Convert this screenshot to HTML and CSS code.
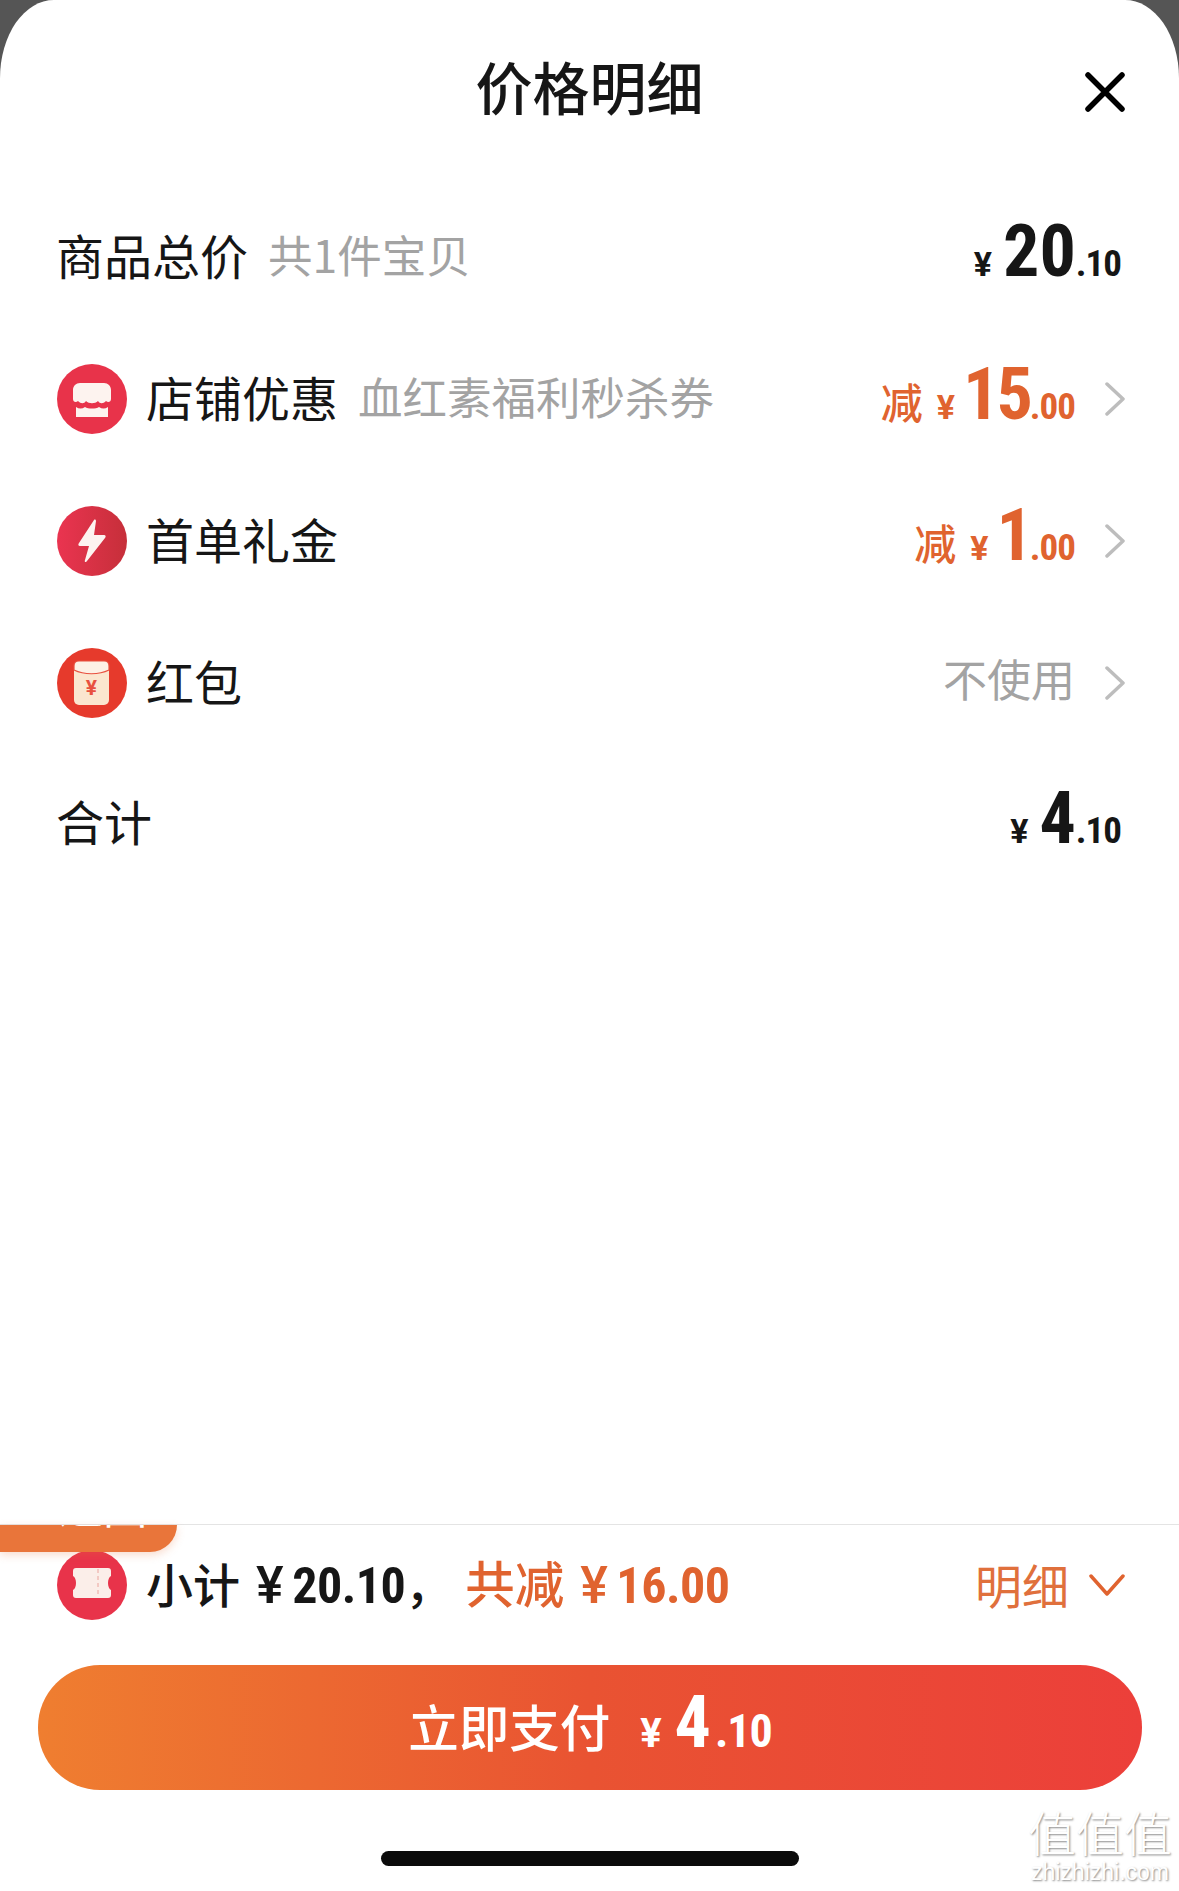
FILE: index.html
```html
<!DOCTYPE html>
<html lang="zh">

<head>
    <meta charset="UTF-8">
    <meta name="viewport" content="width=device-width, initial-scale=1.0">
    <title>价格明细</title>
    <link rel="stylesheet" href="styles.css">
</head>

<body>
    <div class="sheet">
        <header class="sheet-header">
            <h1>价格明细</h1>
            <svg class="close-icon" viewBox="0 0 40 40">
                <path d="M3 3L37 37M37 3L3 37" />
            </svg>
        </header>

        <main class="rows">
            <div class="row">
                <span class="row-title">商品总价</span>
                <span class="row-note">共1件宝贝</span>
                <div class="price">
                    <span class="yen">¥</span><span class="big">20</span><span class="small">.10</span>
                </div>
            </div>

            <div class="row has-arrow">
                <svg class="row-icon" viewBox="0 0 70 70">
                    <circle cx="35" cy="35" r="35" fill="#e8334a" />
                    <path fill="#fdf3ef" d="M23 19H47C51 19 54 22 54 26V35C54 38 51 39 49 37C46 40 43 40 41 37C38 40 32 40 29 37C27 40 24 40 21 37C19 39 16 38 16 35V26C16 22 19 19 23 19Z" />
                    <path fill="#fdf3ef" d="M19 43C22 45 25 45 28 43C31 45 39 45 42 43C45 45 48 45 51 43V53H19Z" />
                </svg>
                <span class="row-title">店铺优惠</span>
                <span class="row-note">血红素福利秒杀券</span>
                <div class="price discount">
                    <span class="jian">减</span><span class="yen">¥</span><span class="big">15</span><span class="small">.00</span>
                </div>
                <svg class="arrow" viewBox="0 0 20 34">
                    <path d="M2 2L18 17L2 32" />
                </svg>
            </div>

            <div class="row has-arrow">
                <svg class="row-icon" viewBox="0 0 70 70">
                    <defs>
                        <linearGradient id="boltBg" x1="0" x2="1" y1="0" y2="0">
                            <stop offset="0" stop-color="#ea3450" />
                            <stop offset="1" stop-color="#c62f3a" />
                        </linearGradient>
                    </defs>
                    <circle cx="35" cy="35" r="35" fill="url(#boltBg)" />
                    <path fill="#fdf3f0" d="M37 14C38 13 39 14 39 15L37 29H47C49 29 49 31 48 32L30 55C29 57 27 56 28 54L32 40H23C21 40 21 38 22 37Z" />
                </svg>
                <span class="row-title">首单礼金</span>
                <div class="price discount">
                    <span class="jian">减</span><span class="yen">¥</span><span class="big">1</span><span class="small">.00</span>
                </div>
                <svg class="arrow" viewBox="0 0 20 34">
                    <path d="M2 2L18 17L2 32" />
                </svg>
            </div>

            <div class="row has-arrow">
                <svg class="row-icon" viewBox="0 0 70 70">
                    <circle cx="35" cy="35" r="35" fill="#e63a2c" />
                    <rect x="17" y="13" width="35" height="44" rx="5" fill="#fbe6cf" />
                    <path fill="#fdf1e6" stroke="#e8503f" stroke-width="1.2" d="M17 22V18C17 15 19 13 22 13H47C50 13 52 15 52 18V22C42 27 27 27 17 22Z" />
                    <text class="packet-yen" x="34.5" y="47" text-anchor="middle">¥</text>
                </svg>
                <span class="row-title">红包</span>
                <div class="price"><span class="unused">不使用</span></div>
                <svg class="arrow" viewBox="0 0 20 34">
                    <path d="M2 2L18 17L2 32" />
                </svg>
            </div>

            <div class="row">
                <span class="row-title">合计</span>
                <div class="price">
                    <span class="yen">¥</span><span class="big">4</span><span class="small">.10</span>
                </div>
            </div>
        </main>

        <footer class="bottom-bar">
            <div class="back-tag"><span class="back-label">‹ 返回</span></div>

            <div class="summary">
                <svg class="row-icon" viewBox="0 0 70 70">
                    <circle cx="35" cy="35" r="35" fill="#e8334a" />
                    <path fill="#fbeee9" d="M19 18H51C53 18 54 19 54 21V26C50 28 50 38 54 40V45C54 47 53 48 51 48H19C17 48 16 47 16 45V40C20 38 20 28 16 26V21C16 19 17 18 19 18Z" />
                    <path stroke="#f3c9c3" stroke-width="2" stroke-dasharray="4 3" d="M41 19V47" />
                </svg>
                <span class="summary-total">小计<span class="num sym">¥</span><span class="num">20.10</span>，</span>
                <span class="summary-off">共减<span class="num sym">¥</span><span class="num">16.00</span></span>
                <span class="detail-link">明细</span>
                <svg class="chevron-down" viewBox="0 0 36 22">
                    <path d="M2 2L18 20L34 2" />
                </svg>
            </div>

            <button class="pay-btn">
                <span class="pay-text">立即支付</span>
                <span class="yen">¥</span><span class="big">4</span><span class="small">.10</span>
            </button>

            <div class="home-bar"></div>
        </footer>

        <div class="watermark">
            <div class="wm-logo">值值值</div>
            <div class="wm-site">zhizhizhi.com</div>
        </div>
    </div>
</body>

</html>
```

FILE: styles.css
```css
* {
    box-sizing: border-box;
}

body {
    margin: 0;
    background-color: #555;
    font-family: "Noto Sans CJK SC", "Noto Sans", sans-serif;
    color: #161616;
}

.sheet {
    position: relative;
    display: flex;
    flex-direction: column;
    height: 1891px;
    background-color: #fff;
    border-radius: 54px 54px 0 0 / 78px 78px 0 0;
    overflow: hidden;
}

.sheet-header {
    position: relative;
    height: 186px;
    padding-top: 44px;
    text-align: center;
}

h1 {
    margin: 0;
    font-size: 57px;
    line-height: 82px;
    font-weight: 500;
}

.close-icon {
    position: absolute;
    top: 72px;
    right: 54px;
    width: 40px;
    height: 40px;
}

.close-icon path {
    fill: none;
    stroke: #000;
    stroke-width: 5.5;
    stroke-linecap: round;
}

.rows {
    flex: 1;
}

.row {
    display: flex;
    align-items: center;
    height: 141.6px;
    padding: 0 58px 0 56px;
}

.row.has-arrow {
    padding: 2px 54px 0 57px;
}

.row-icon {
    flex: none;
    width: 70px;
    height: 70px;
    margin-right: 19px;
}

.packet-yen {
    font-family: Roboto, sans-serif;
    font-size: 21px;
    font-weight: 700;
    fill: #e8503f;
}

.row-title {
    margin-bottom: 6px;
    font-size: 48px;
    line-height: 60px;
}

.row-note {
    margin: 0 0 6px 20px;
    font-size: 44.5px;
    line-height: 60px;
    color: #a3a3a3;
}

.price {
    display: flex;
    align-items: baseline;
    margin: 0 0 9px auto;
    font-family: Roboto, sans-serif;
    font-stretch: 75%;
    font-weight: 700;
}

.yen {
    margin-right: 11px;
    font-size: 34px;
    font-stretch: 100%;
}

.big {
    font-size: 72px;
    line-height: 72px;
}

.small {
    font-size: 37px;
    letter-spacing: -1px;
}

.discount {
    color: #e0632f;
}

.discount .yen {
    margin-right: 8px;
}

.discount .big {
    letter-spacing: -3px;
}

.jian {
    margin-right: 14px;
    font-family: "Noto Sans CJK SC", sans-serif;
    font-size: 42px;
    font-weight: 500;
}

.unused {
    font-family: "Noto Sans CJK SC", sans-serif;
    font-size: 44px;
    font-weight: 400;
    color: #a3a3a3;
}

.arrow {
    flex: none;
    width: 20px;
    height: 34px;
    margin-left: 30px;
}

.arrow path {
    fill: none;
    stroke: #bdbdbd;
    stroke-width: 3.5;
    stroke-linecap: round;
    stroke-linejoin: round;
}

.bottom-bar {
    position: relative;
    height: 367px;
    border-top: 1px solid #e4e4e4;
    padding: 0 37px 0 38px;
}

.back-tag {
    position: absolute;
    top: 0;
    left: 0;
    width: 177px;
    height: 27px;
    padding-left: 36px;
    overflow: hidden;
    background-color: #e9753a;
    border-radius: 0 0 36px 0;
    box-shadow: 0 3px 8px rgba(233, 117, 58, 0.25);
}

.back-label {
    display: block;
    margin-top: -52px;
    font-size: 44px;
    line-height: 64px;
    color: #fff;
    white-space: nowrap;
}

.summary {
    display: flex;
    align-items: center;
    height: 120px;
    padding: 0 17px 0 19px;
}

.summary-total,
.summary-off {
    margin-bottom: 2px;
    font-size: 47px;
    font-weight: 500;
    line-height: 60px;
    white-space: nowrap;
}

.summary-off {
    margin-left: 13px;
    font-size: 49.5px;
    color: #e0632f;
}

.num {
    font-family: Roboto, "Noto Sans CJK SC", sans-serif;
    font-stretch: 75%;
    font-weight: 700;
    font-size: 50px;
    letter-spacing: -0.5px;
}

.num.sym {
    margin: 0 9px 0 16px;
    font-size: 52px;
    font-stretch: 100%;
    font-weight: 500;
}

.detail-link {
    margin-left: auto;
    margin-bottom: 3px;
    font-size: 47px;
    line-height: 60px;
    color: #e0703c;
}

.chevron-down {
    flex: none;
    width: 36px;
    height: 22px;
    margin-left: 20px;
}

.chevron-down path {
    fill: none;
    stroke: #e0632f;
    stroke-width: 3.5;
    stroke-linecap: round;
    stroke-linejoin: round;
}

.pay-btn {
    display: flex;
    align-items: baseline;
    justify-content: center;
    width: 1104px;
    height: 125px;
    margin-top: 20px;
    padding: 22px 0 0;
    border: none;
    border-radius: 62px;
    background: linear-gradient(90deg, #ef7e30, #e95332 50%, #ec3f3a);
    font-family: Roboto, sans-serif;
    font-stretch: 75%;
    font-weight: 700;
    color: #fff;
}

.pay-text {
    margin-right: 30px;
    font-family: "Noto Sans CJK SC", sans-serif;
    font-size: 50.5px;
    font-weight: 500;
}

.pay-btn .yen {
    margin-right: 13px;
    font-size: 40px;
}

.pay-btn .small {
    margin-left: 4px;
    font-size: 46px;
}

.home-bar {
    width: 418px;
    height: 15px;
    margin: 61px auto 0;
    border-radius: 8px;
    background-color: #0b0b0b;
}

.watermark {
    position: absolute;
    right: 6px;
    bottom: 7px;
    width: 146px;
    text-align: center;
    color: #fff;
    text-shadow: 1px 1px 2px #8a8a8a;
}

.wm-logo {
    font-size: 48px;
    line-height: 58px;
    font-weight: 300;
    white-space: nowrap;
}

.wm-site {
    font-family: "Liberation Sans", sans-serif;
    font-size: 23px;
    line-height: 24px;
}
```
